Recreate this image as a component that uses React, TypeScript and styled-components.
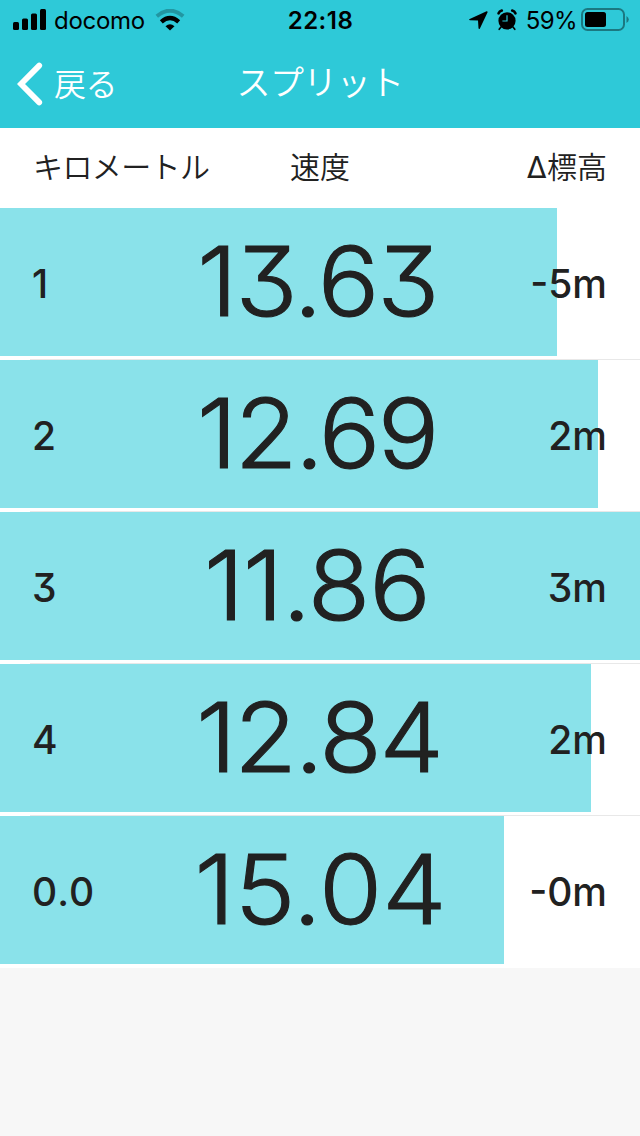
import React from "react";
import styled, { createGlobalStyle } from "styled-components";

const GlobalStyle = createGlobalStyle`
  * { box-sizing: border-box; }
  body { margin: 0; background: #f7f7f7; font-family: Inter, "Noto Sans CJK JP", sans-serif; color: #212121; }
`;

const Screen = styled.div`
  width: 640px;
  height: 1136px;
  background: #f7f7f7;
  overflow: hidden;
`;

const Header = styled.header`
  height: 128px;
  background: #2ec9d8;
`;

const StatusBar = styled.div`
  display: grid;
  grid-template-columns: 1fr auto 1fr;
  height: 40px;
  align-items: center;
  color: #000;
  padding: 0 10px 0 13px;
`;

const StatusGroup = styled.div<{ $end?: boolean }>`
  display: flex;
  align-items: center;
  justify-content: ${(p) => (p.$end ? "flex-end" : "flex-start")};
  height: 40px;
`;

const IconPair = styled.span`
  display: flex;
  align-items: center;
  gap: 9px;
`;

const Carrier = styled.span`
  font-size: 24px;
  line-height: 38px;
  padding-top: 2px;
  letter-spacing: -0.3px;
  margin: 0 10px 0 8px;
`;

const Clock = styled.time`
  font-size: 24px;
  font-weight: 600;
  line-height: 38px;
  padding-top: 2px;
  letter-spacing: 0.5px;
  margin-left: -2px;
`;

const Percent = styled.span`
  font-size: 24px;
  line-height: 38px;
  padding-top: 2px;
  margin: 0 4px 0 9px;
  letter-spacing: -0.6px;
`;

const NavBar = styled.nav`
  display: grid;
  grid-template-columns: 1fr auto 1fr;
  height: 88px;
  align-items: center;
  color: #fff;
  font-family: "Noto Sans CJK JP", sans-serif;
  font-weight: 350;
`;

const Back = styled.a`
  display: flex;
  align-items: center;
  gap: 11px;
  padding-left: 17px;
  font-size: 32px;
  line-height: 84px;
  height: 88px;
`;

const BackText = styled.span`
  height: 88px;
  letter-spacing: -0.5px;
`;

const Title = styled.h1`
  margin: 0;
  font-size: 34px;
  font-weight: 350;
  line-height: 82px;
  height: 88px;
  letter-spacing: -0.6px;
`;

const Columns = styled.div`
  display: grid;
  grid-template-columns: 1fr auto 1fr;
  height: 80px;
  padding: 0 33px;
  background: #fff;
  font-family: "Noto Sans CJK JP", sans-serif;
  font-weight: 350;
  font-size: 30px;
  line-height: 75px;
`;

const ColumnName = styled.div<{ $end?: boolean; $tight?: boolean }>`
  text-align: ${(p) => (p.$end ? "right" : "left")};
  letter-spacing: ${(p) => (p.$tight ? "-0.6px" : "0")};
`;

const Delta = styled.span`
  font-family: Inter, sans-serif;
  font-weight: 400;
  font-size: 30px;
`;

const Row = styled.div<{ $bar: number }>`
  display: grid;
  grid-template-columns: 160px 320px 160px;
  height: 152px;
  background:
    linear-gradient(#8ae2ea, #8ae2ea) 0 0 / ${(p) => p.$bar}px 148px no-repeat,
    linear-gradient(#e8e8e8, #e8e8e8) 30px 151px / 610px 1px no-repeat,
    #fff;

  &:last-child {
    background:
      linear-gradient(#8ae2ea, #8ae2ea) 0 0 / ${(p) => p.$bar}px 148px no-repeat,
      #fff;
  }
`;

const Label = styled.div<{ $end?: boolean }>`
  font-size: 39px;
  font-weight: 500;
  line-height: 151px;
  padding: 0 33px 0 32px;
  white-space: nowrap;
  text-align: ${(p) => (p.$end ? "right" : "left")};
  letter-spacing: ${(p) => (p.$end ? "0" : "1px")};
  font-feature-settings: "cv09" 1;
`;

const Speed = styled.div<{ $spacing: number; $shift: number }>`
  font-size: 96.5px;
  font-weight: 300;
  line-height: 146px;
  text-align: center;
  white-space: nowrap;
  letter-spacing: ${(p) => p.$spacing}px;
  text-indent: ${(p) => p.$shift * 2}px;
  transform: scaleX(1.06);
  -webkit-text-stroke: 1.1px #212121;
  font-feature-settings: "cv09" 1;
`;

const splits = [
  { km: "1", speed: "13.63", delta: "-5m", bar: 557, spacing: -1.9, shift: -2.5 },
  { km: "2", speed: "12.69", delta: "2m", bar: 598, spacing: -2.4, shift: -3 },
  { km: "3", speed: "11.86", delta: "3m", bar: 640, spacing: -1, shift: -3 },
  { km: "4", speed: "12.84", delta: "2m", bar: 591, spacing: -2.1, shift: -1 },
  { km: "0.0", speed: "15.04", delta: "-0m", bar: 504, spacing: 0, shift: 0.5 },
];

const Signal = () => (
  <svg width="33" height="22" viewBox="0 0 33 22">
    <rect x="0" y="13" width="6" height="8" rx="1.5" />
    <rect x="9" y="9.5" width="6" height="11.5" rx="1.5" />
    <rect x="18" y="4.5" width="6" height="16.5" rx="1.5" />
    <rect x="27" y="0" width="6" height="21" rx="1.5" />
  </svg>
);

const Wifi = () => (
  <svg width="30" height="22" viewBox="0 0 30 22" fill="none">
    <path d="M1.8 7.2Q15 -3.8 28.2 7.2" stroke="#000" strokeOpacity="0.25" strokeWidth="4" />
    <path d="M6.3 12.8Q15 5.2 23.7 12.8" stroke="#000" strokeWidth="4.4" />
    <path d="M10.5 17.2Q15 13.4 19.5 17.2L15 21.6Z" fill="#000" />
  </svg>
);

const Location = () => (
  <svg width="19" height="21" viewBox="0 -1 19 21">
    <path d="M17.6 0.3L0.7 8.1Q-0.5 9 1 9.3L9 9.5L9.5 17.3Q10 18.7 10.9 17.4L18.6 1.3Q18.7 0.1 17.6 0.3Z" />
  </svg>
);

const Alarm = () => (
  <svg width="20" height="22" viewBox="0 0 20 22">
    <circle cx="10" cy="11.8" r="8.6" />
    <path d="M1.6 4.3Q2.4 2.2 4.8 1.6M18.4 4.3Q17.6 2.2 15.2 1.6" stroke="#000" strokeWidth="2.6" strokeLinecap="round" fill="none" />
    <path d="M4 18L2.2 20.3M16 18L17.8 20.3" stroke="#000" strokeWidth="1.6" strokeLinecap="round" />
    <path d="M10 6.2V12H5.4" stroke="#2ec9d8" strokeWidth="1.2" fill="none" />
  </svg>
);

const Battery = () => (
  <svg width="49" height="24" viewBox="0 0 49 24">
    <rect x="1" y="1" width="42" height="21" rx="5.5" fill="none" stroke="#000" strokeOpacity="0.4" strokeWidth="2" />
    <rect x="4" y="4" width="21" height="15" rx="2.5" />
    <path d="M45.5 8Q47.8 9.5 47.8 11.5T45.5 15Z" fillOpacity="0.4" />
  </svg>
);

const Chevron = () => (
  <svg width="26" height="44" viewBox="0 0 26 44" fill="none">
    <path d="M22.2 3.6L4 22L22.2 40.4" stroke="#fff" strokeWidth="5.8" strokeLinecap="round" />
  </svg>
);

export default function App() {
  return (
    <Screen>
      <GlobalStyle />
      <Header>
        <StatusBar>
          <StatusGroup>
            <Signal />
            <Carrier>docomo</Carrier>
            <Wifi />
          </StatusGroup>
          <Clock>22:18</Clock>
          <StatusGroup $end>
            <IconPair>
              <Location />
              <Alarm />
            </IconPair>
            <Percent>59%</Percent>
            <Battery />
          </StatusGroup>
        </StatusBar>
        <NavBar>
          <Back>
            <Chevron />
            <BackText>戻る</BackText>
          </Back>
          <Title>スプリット</Title>
        </NavBar>
      </Header>
      <Columns>
        <ColumnName $tight>キロメートル</ColumnName>
        <ColumnName>速度</ColumnName>
        <ColumnName $end>
          <Delta>Δ</Delta>標高
        </ColumnName>
      </Columns>
      <main>
        {splits.map((s) => (
          <Row key={s.km} $bar={s.bar}>
            <Label>{s.km}</Label>
            <Speed $spacing={s.spacing} $shift={s.shift}>{s.speed}</Speed>
            <Label $end>{s.delta}</Label>
          </Row>
        ))}
      </main>
    </Screen>
  );
}
